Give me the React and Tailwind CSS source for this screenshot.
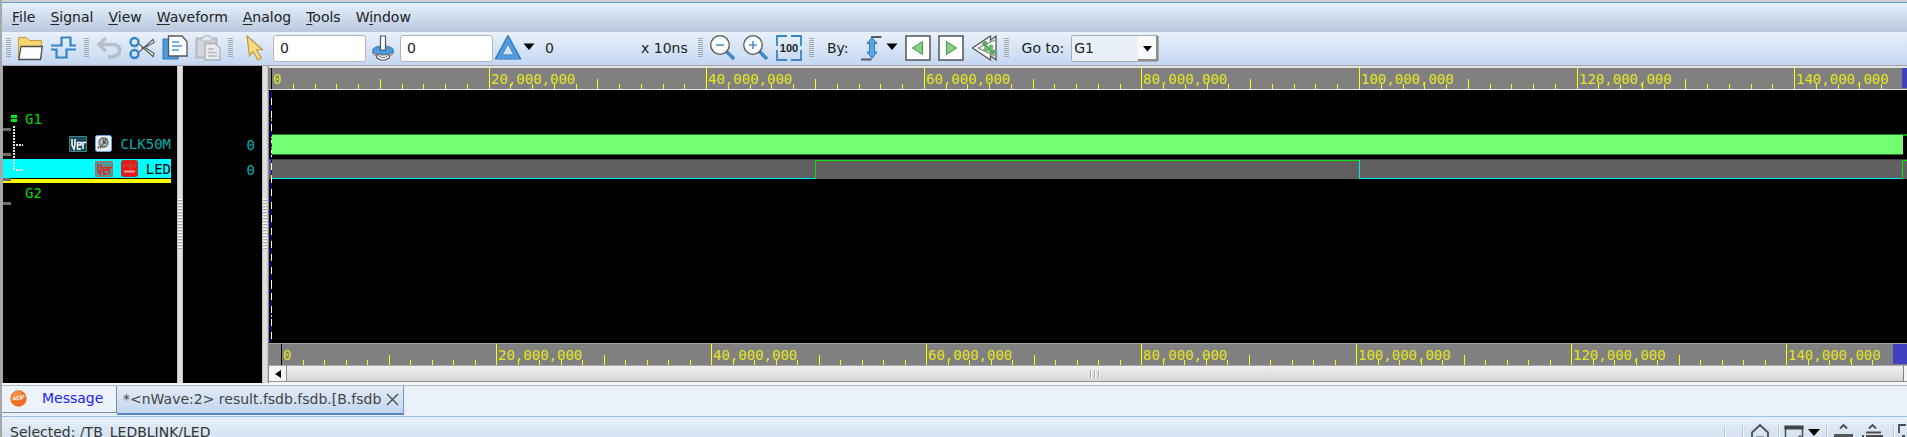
import React from "react";

const MENUS = [
  ["", "F", "ile"],
  ["", "S", "ignal"],
  ["", "V", "iew"],
  ["", "W", "aveform"],
  ["", "A", "nalog"],
  ["", "T", "ools"],
  ["W", "i", "ndow"],
];

function Grip() {
  return (
    <svg className="h-5 w-[5px] shrink-0" viewBox="0 0 5 20" aria-hidden="true">
      {Array.from({ length: 10 }, (_, i) => (
        <rect key={i} x="0" y={i * 2} width="5" height="1" fill="#a3a8ae" />
      ))}
    </svg>
  );
}

function Tool({ label, children }) {
  return (
    <button type="button" aria-label={label} className="h-[26px] w-[26px] shrink-0">
      <svg viewBox="0 0 26 26" className="h-[26px] w-[26px]" fill="none">
        {children}
      </svg>
    </button>
  );
}

function Caret({ label }) {
  return (
    <button type="button" aria-label={label} className="h-[26px] w-3 shrink-0">
      <svg viewBox="0 0 12 26" className="h-[26px] w-3">
        <path d="M0.500 8.500H11.500L6 15z" fill="#000" />
      </svg>
    </button>
  );
}

const Magnifier = ({ plus }) => (
  <>
    <path d="M16.500 16.500L24 24" stroke="#3c8ad0" strokeWidth="3.600" />
    <circle cx="10" cy="10" r="9.300" fill="#fff" stroke="#555" strokeWidth="1.300" />
    <path d={plus ? "M6 10h8M10 6v8" : "M6 10h8"} stroke="#4a90d0" strokeWidth="1.600" />
  </>
);

const fieldClass =
  "h-[27px] w-[93px] shrink-0 rounded-[3px] border border-[#b5b5b5] bg-white px-[6px] text-[14px] text-[#222] outline-none";

function Toolbar() {
  return (
    <div className="flex h-[33px] shrink-0 items-center gap-[7px] bg-linear-to-b from-[#e9f1fb] to-[#c4d7f1] pb-px pl-1">
      <Grip />
      <Tool label="Open">
        <path d="M0.500 23V2.500h8l3 3H23.500V23z" fill="#f9d572" stroke="#c79c45" />
        <path d="M3 11.500H24.300L22.500 24.500H0.800z" fill="#fff" stroke="#4c4c4c" strokeWidth="1.300" />
      </Tool>
      <Tool label="Get signals">
        <path d="M0 14.500H5.500V22.500H15.500V14.500H25" stroke="#3686c7" strokeWidth="2.200" />
        <path d="M0 10.500H10.500V2.500H19.500V10.500H25" stroke="#3686c7" strokeWidth="2.200" />
      </Tool>
      <Grip />
      <Tool label="Undo">
        <path d="M10 3L2.500 9.500L10 16" stroke="#b9bec4" strokeWidth="3" />
        <path d="M3 9.500H16C27 9.500 26 22 15 22H12" stroke="#b9bec4" strokeWidth="3.600" />
      </Tool>
      <Tool label="Cut">
        <circle cx="5.500" cy="7" r="4" stroke="#3686c7" strokeWidth="2.400" />
        <circle cx="5.500" cy="19" r="4" stroke="#3686c7" strokeWidth="2.400" />
        <path d="M10 9L24 21.500L25 18.500L16 12.500L25 7.500L24 4.500L10 17" fill="#fff" stroke="#666" strokeWidth="1.300" />
        <circle cx="13.500" cy="13" r="1" fill="#444" />
      </Tool>
      <Tool label="Copy">
        <path d="M1 4h15v20H1z" fill="#4c9be0" stroke="#2c78bd" />
        <path d="M6.500 1H20l5 5.500V21H6.500z" fill="#fff" stroke="#555" strokeWidth="1.300" />
        <path d="M10 7h7M10 11h10M10 15h7" stroke="#4c9be0" strokeWidth="1.500" />
      </Tool>
      <Tool label="Paste">
        <path d="M1.500 3.500h20v19h-20z" fill="#d3d7dc" stroke="#b4b8bd" strokeWidth="2" />
        <path d="M7 4V2h3V0.500h4V2h3v4H7z" fill="#e5e8ec" stroke="#b4b8bd" />
        <path d="M10 8.500h10l5 4.500v12H10z" fill="#e8ebf0" stroke="#adb1b6" strokeWidth="1.300" />
        <path d="M13 14h6M13 17.500h9M13 21h9" stroke="#b4b8bd" strokeWidth="1.400" />
      </Tool>
      <Grip />
      <Tool label="Cursor">
        <path d="M7 1L22.500 14.500L16.500 15L21.500 23L18 25L13 16.500L9.500 20.500z" fill="#fbdc80" stroke="#bf984a" strokeWidth="1.200" />
      </Tool>
      <input aria-label="Cursor time" defaultValue="0" className={fieldClass} />
      <button type="button" aria-label="Marker" className="h-[26px] w-5 shrink-0">
        <svg viewBox="2 0 22 26" className="-ml-px h-[26px] w-[22px]" fill="none">
          <path d="M5 17l2 6 4 2h4l4-2 2-6z" fill="#fff" stroke="#555" strokeWidth="1.200" />
          <ellipse cx="13" cy="15.500" rx="10.500" ry="4.500" fill="#4c9be0" stroke="#2c78bd" />
          <path d="M2.500 17c1 5 5 2 6 4 2 2 7 2 9 0 1-2 5 1 6-4-5 4-16 4-21 0z" fill="#fff" stroke="#666" />
          <path d="M10.500 1h5v14h-5z" fill="#fff" stroke="#555" strokeWidth="1.200" />
        </svg>
      </button>
      <div className="flex shrink-0 items-center gap-[2px]">
        <input aria-label="Marker time" defaultValue="0" className={fieldClass} />
        <Tool label="Delta">
          <path d="M13 4.500L22.500 22H3.500z" stroke="#2c6faf" strokeWidth="5" />
          <path d="M13 5L22 22H4z" stroke="#4f9fe2" strokeWidth="3.400" />
        </Tool>
        <Caret label="Delta options" />
        <span className="w-[102px] pl-2">0</span>
        <span className="w-[50px] whitespace-nowrap">x 10ns</span>
      </div>
      <Grip />
      <Tool label="Zoom out"><Magnifier /></Tool>
      <Tool label="Zoom in"><Magnifier plus /></Tool>
      <Tool label="Zoom all">
        <path d="M1 11V1h10M15 1h10v10M1 15v10h10M15 25h10V15" stroke="#3686c7" strokeWidth="1.800" />
        <text x="13" y="17" textAnchor="middle" fontSize="11" fontWeight="bold" fontFamily="Liberation Sans, sans-serif" fill="#222">100</text>
      </Tool>
      <Grip />
      <span className="shrink-0 pl-[6px]">By:</span>
      <div className="flex shrink-0 items-center pl-1">
        <Tool label="Any edge">
          <path d="M11 2h10.500M1 24.500h10.500" stroke="#5a5a5a" strokeWidth="2" />
          <path d="M12 2.500L17 8.500H14.500V17H17L12 23.500L7 17H9.500V8.500H7z" fill="#58a6e8" stroke="#3578b4" />
        </Tool>
        <Caret label="Edge options" />
      </div>
      <Tool label="Search backward">
        <path d="M1 1h24v24H1z" fill="#fff" stroke="#555" strokeWidth="1.500" />
        <path d="M17.500 6.500v13L7.500 13z" fill="#86cf86" stroke="#3f9c45" />
      </Tool>
      <Tool label="Search forward">
        <path d="M1 1h24v24H1z" fill="#fff" stroke="#555" strokeWidth="1.500" />
        <path d="M8.500 6.500v13l10-6.500z" fill="#86cf86" stroke="#3f9c45" />
      </Tool>
      <Tool label="Trace drivers">
        <path d="M19.500 1v4.500L25 1v24l-5.500-4.500V25L1.500 13z" fill="#fff" stroke="#555" strokeWidth="1.300" />
        <path d="M24 5L7 13l17 8" stroke="#666" />
        <path d="M12 8.500l10 9.500" stroke="#5aa65d" strokeWidth="3" />
        <circle cx="14" cy="8.500" r="2.600" fill="#58ad5c" />
        <circle cx="20" cy="12" r="2.400" fill="#6cb970" />
        <circle cx="15" cy="14.500" r="2.400" fill="#6cb970" />
        <circle cx="21.500" cy="17" r="2.800" fill="#58ad5c" />
      </Tool>
      <Grip />
      <label htmlFor="goto" className="shrink-0 pl-[6px]">Go to:</label>
      <div className="relative flex shrink-0 items-center">
        <select
          id="goto"
          defaultValue="G1"
          className="h-[27px] w-[88px] appearance-none rounded-[2px] border border-[#a9adb3] bg-[#e9f0f9] px-[2px] text-[14px] text-[#222]"
        >
          <option>G1</option>
          <option>G2</option>
        </select>
        <svg className="pointer-events-none absolute top-px right-px h-[25px] w-5" viewBox="0 0 20 25" aria-hidden="true">
          <path d="M0 0h20v25H0z" fill="#8d8d8d" />
          <path d="M0 0h18v23H0z" fill="#fafafa" />
          <path d="M5 10h9l-4.500 5.500z" fill="#000" />
        </svg>
      </div>
    </div>
  );
}

function Splitter() {
  return (
    <div className="flex w-[6px] shrink-0 items-center border-x border-x-[#c4c4c4] bg-[#dedede]">
      <svg className="h-[52px] w-1" viewBox="0 0 4 52" aria-hidden="true">
        {Array.from({ length: 17 }, (_, i) => (
          <g key={i}>
            <rect x="0" y={i * 3} width="4" height="1" fill="#fff" />
            <rect x="0" y={i * 3 + 1} width="4" height="1" fill="#a9a9a9" />
          </g>
        ))}
      </svg>
    </div>
  );
}

function VerIcon({ selected }) {
  const fg = selected ? "#f01818" : "#fff";
  return (
    <svg viewBox="0 0 18 16" className="h-4 w-[18px] shrink-0" fill="none" aria-hidden="true">
      <path d="M0.500 0.500h17v15H0.500z" fill={selected ? "#4c9a96" : "#184c58"} stroke={selected ? "#b06a60" : "#4a7f8b"} />
      <path d="M3 3v6l2 4 1-4V3M12 9H8.500V6.500H12zM8.500 9v4H12M14 13V6.500h3" stroke={fg} strokeWidth="1.500" />
    </svg>
  );
}

function SignalList() {
  return (
    <div className="relative w-[174px] shrink-0 bg-black pt-10 font-['DejaVu_Sans_Mono',monospace] text-[14px] leading-5">
      <div className="flex h-[25px] items-center gap-2 pl-2 text-[#00d800]">
        <svg viewBox="0 0 6 7" className="h-[7px] w-[6px]" aria-hidden="true">
          <path d="M0 0h6v3H0zM0 4h6v3H0z" fill="#00f000" />
        </svg>
        G1
      </div>
      <div className="flex h-7 items-center justify-end gap-2 pr-[6px] pb-[3px] text-[#00b0b0]">
        <VerIcon />
        <svg viewBox="0 0 17 17" className="h-[17px] w-[17px]" fill="none" aria-hidden="true">
          <rect x="0.500" y="0.500" width="16" height="16" rx="2" fill="#e9f0fa" stroke="#6fa3dc" />
          <circle cx="8.500" cy="7.500" r="4.500" fill="#bbb" stroke="#666" strokeWidth="1.300" />
          <path d="M5 13.500L12 3M8.500 4.500v3.500h3M4 11l-1 2.500" stroke="#555" strokeWidth="1.300" />
        </svg>
        CLK50M
      </div>
      <div className="mr-[6px] flex h-[19px] items-center justify-end gap-2 bg-[#00ffff] text-black">
        <VerIcon selected />
        <svg viewBox="0 0 17 17" className="h-[17px] w-[17px]" fill="none" aria-hidden="true">
          <rect x="0.500" y="0.500" width="16" height="16" rx="2" fill="#f21414" stroke="#a83830" />
          <path d="M3 8V4l2 2 2-2v4M12 4H9v2h3v2H9M13 4h3M14.500 4v4" stroke="#a65048" />
          <path d="M3 11.500h11" stroke="#d8a8a0" strokeWidth="2" />
        </svg>
        LED
      </div>
      <div className="mt-px mr-[6px] h-1 bg-[#ffff00]" />
      <div className="pl-[22px] text-[#00d800]">G2</div>
      <svg className="absolute top-0 left-0 h-[150px] w-6" viewBox="0 0 24 150" fill="none" aria-hidden="true">
        <path d="M0 63.500h8M0 88.500h8M0 113.500h8M0 137.500h8" stroke="#6e6e6e" strokeWidth="3" />
        <path d="M11 60v44M13 79h7M13 104h7" stroke="#e4e4e4" strokeWidth="2" strokeDasharray="2 1" />
      </svg>
    </div>
  );
}

function ValueList() {
  return (
    <div className="w-[79px] shrink-0 bg-black pt-[67px] pr-[7px] text-right font-['DejaVu_Sans_Mono',monospace] text-[14px] leading-[25px] text-[#00b0b0]">
      <div>0</div>
      <div>0</div>
    </div>
  );
}

function Ruler({ origin, step, end }) {
  const majors = Array.from({ length: 8 }, (_, i) => i);
  const minors = Array.from({ length: 80 }, (_, i) => i).filter((i) => i % 10 && origin + (i * step) / 10 < end);
  return (
    <svg className="block h-[21px] w-full" aria-hidden="true" shapeRendering="crispEdges">
      {minors.map((i) => {
        const h = i % 5 === 0 ? 10 : 5;
        return <rect key={i} x={Math.round(origin + (i * step) / 10)} y={21 - h} width="1" height={h} fill="#ffff00" />;
      })}
      {majors.map((i) => {
        const x = Math.round(origin + i * step);
        return (
          <g key={i}>
            <rect x={x} y="0" width="1" height="21" fill={i ? "#ffff00" : "#000"} />
            <text x={x + 2} y="16" fill="#e4e420" fontSize="14" fontFamily="'DejaVu Sans Mono', monospace">
              {(i * 20000000).toLocaleString("en-US")}
            </text>
          </g>
        );
      })}
      <rect x={end} y="0" width="100%" height="20" fill="#4040c0" />
    </svg>
  );
}

function Waves() {
  return (
    <svg className="block min-h-0 w-full flex-1 bg-black" fill="none" aria-hidden="true" shapeRendering="crispEdges">
      <rect x="2" y="44" width="1632" height="21" fill="#247a24" />
      <rect x="2" y="45" width="1632" height="19" fill="#73ff73" />
      <rect x="1634" y="44" width="100%" height="2" fill="#00a000" />
      <rect x="0" y="69" width="100%" height="20" fill="#606060" />
      <rect x="0" y="69" width="100%" height="1" fill="#404040" />
      <path d="M2 88.500H546" stroke="#00e8f0" />
      <path d="M546.500 89V70.500H1090" stroke="#10dc10" />
      <path d="M1090.500 70V88.500H1633" stroke="#00e8f0" />
      <path d="M1633.500 89V70.500H3000" stroke="#00f000" />
      <path d="M2.500 1V252" stroke="#0000f0" />
      <path d="M2.500 8V252" stroke="#fff" strokeDasharray="7 6" />
      <path d="M2.500 29V252" stroke="#f0f000" strokeDasharray="2 26" />
      <path d="M2.500 48V65" stroke="#a02080" strokeDasharray="2 3" />
    </svg>
  );
}

function WavePane() {
  return (
    <div className="flex min-w-0 flex-1 flex-col border-l border-[#8a8a8a]">
      <div className="shrink-0 border-t-2 border-b border-[#e2e2e2] bg-[#808080]">
        <Ruler origin={2} step={217.6} end={1633} />
      </div>
      <Waves />
      <div className="shrink-0 border-y border-[#a6a6a6] bg-[#808080]">
        <Ruler origin={12} step={215} end={1624} />
      </div>
      <div className="flex h-4 shrink-0 items-stretch border-b border-[#909090] bg-linear-to-b from-[#f0f0f0] to-[#d6d6d6]">
        <button type="button" aria-label="Scroll left" className="flex w-[18px] items-center justify-center border-r border-[#909090] bg-[#f4f4f4]">
          <svg viewBox="0 0 6 8" className="h-2 w-[6px]"><path d="M6 0v8L0 4z" fill="#000" /></svg>
        </button>
        <div className="flex flex-1 items-center justify-center">
          <svg viewBox="0 0 10 8" className="h-2 w-[10px]" aria-hidden="true">
            <path d="M0.500 0v8M4.500 0v8M8.500 0v8" stroke="#aaa" />
            <path d="M1.500 0v8M5.500 0v8M9.500 0v8" stroke="#fff" />
          </svg>
        </div>
        <div className="w-1 border-l border-[#808080] bg-[#f4f4f4]" />
      </div>
      <div className="h-px shrink-0 bg-[#f4f6f8]" />
    </div>
  );
}

function Tabs() {
  return (
    <div className="flex h-8 shrink-0 items-start border-t border-t-[#b0bac6] border-b border-b-[#9dbde9] bg-[#eaf1f9]">
      <button type="button" className="flex h-[27px] w-[115px] items-center gap-[15px] border-r border-b border-[#7a8ba8] bg-[#edf3fa] pb-[2px] pl-2 text-[#1a1aff]">
        <svg viewBox="0 0 17 17" className="h-[17px] w-[17px]" fill="none" aria-hidden="true">
          <circle cx="8.500" cy="8.500" r="8.200" fill="#ee7024" />
          <circle cx="7.500" cy="6" r="5" fill="#f58d4c" />
          <path d="M3 10.500V7.500l2 2.500V7M8.500 6.500H7v3h1.500M10 6v3h1.500V6zM13 8.500V5l1.500 2" stroke="#fff" strokeWidth="0.900" />
        </svg>
        Message
      </button>
      <div className="flex h-[29px] items-center gap-[5px] border-r border-b-2 border-r-[#6f96cc] border-b-[#5686c8] bg-linear-to-b from-[#e3ecf8] to-[#c3d6f0] pr-1 pb-px pl-[6px] text-[#444]">
        <button type="button">*&lt;nWave:2&gt; result.fsdb.fsdb.[B.fsdb</button>
        <button type="button" aria-label="Close tab">
          <svg viewBox="0 0 13 13" className="h-[13px] w-[13px]" fill="none">
            <path d="M1 1l11 11M12 1L1 12" stroke="#4c4c4c" strokeWidth="1.400" />
          </svg>
        </button>
      </div>
    </div>
  );
}

function Separator() {
  return <div className="mt-[9px] h-6 w-[2px] shrink-0 border-l border-[#bcc3cc] bg-[#f2f4f7]" />;
}

function StatusBar() {
  return (
    <div className="flex h-5 shrink-0 items-start overflow-hidden bg-linear-to-b from-[#e8f0fa] to-[#d5e2f2] pl-2 text-[#333]">
      <span className="flex-1 pt-[5px]">Selected: /TB_LEDBLINK/LED</span>
      <Separator />
      <div className="w-4" />
      <Separator />
      <button type="button" aria-label="Home" className="mr-2 ml-[6px] pt-[6px]">
        <svg viewBox="0 0 20 22" className="h-[22px] w-5" fill="none">
          <path d="M2 21V9.500L10 2l8 7.500V21M6 14.500h8" stroke="#4c4c4c" strokeWidth="1.800" />
        </svg>
      </button>
      <Separator />
      <button type="button" aria-label="Windows" className="ml-1 pt-[6px]">
        <svg viewBox="0 0 20 22" className="h-[22px] w-5" fill="none">
          <path d="M1.500 3v18M18.500 3v11M1 19h11M16 13v7" stroke="#4c4c4c" strokeWidth="1.500" />
          <path d="M0.500 2.500h19v4h-19z" fill="#444" />
          <path d="M12 16l4-4 4 4z" fill="#444" />
        </svg>
      </button>
      <button type="button" aria-label="Window options" className="mr-[6px] ml-1 pt-3">
        <svg viewBox="0 0 12 7" className="h-[7px] w-3"><path d="M0 0h12L6 7z" fill="#000" /></svg>
      </button>
      <Separator />
      <button type="button" aria-label="Collapse panel" className="ml-[5px] pt-[6px]">
        <svg viewBox="0 0 21 22" className="h-[22px] w-[21px]" fill="none">
          <path d="M7 5.500L10.500 2L14 5.500" stroke="#4c4c4c" strokeWidth="1.800" />
          <path d="M1 11h19v9H1z" fill="#555" />
        </svg>
      </button>
      <button type="button" aria-label="Expand list" className="mr-[10px] ml-2 pt-[6px]">
        <svg viewBox="0 0 21 22" className="h-[22px] w-[21px]" fill="none">
          <path d="M7 5.500L10.500 2L14 5.500M4 9.500h15M0 13h2M4 13h17" stroke="#4c4c4c" strokeWidth="1.800" />
        </svg>
      </button>
      <Separator />
      <button type="button" aria-label="Full screen" className="ml-[3px] w-[9px] overflow-hidden pt-[6px]">
        <svg viewBox="0 0 9 22" className="h-[22px] w-[9px]" fill="none">
          <path d="M1 10V2h7M4 13h3" stroke="#4c4c4c" strokeWidth="1.800" />
        </svg>
      </button>
    </div>
  );
}

export default function App() {
  return (
    <div className="flex h-screen overflow-hidden bg-[#a8a8a8] pl-[2px] font-['DejaVu_Sans',sans-serif] text-[14px] leading-5 text-[#222]">
      <div className="flex min-w-0 flex-1 flex-col">
        <div className="h-[2px] shrink-0 bg-[#d0d0d0]" />
        <nav className="flex h-[30px] shrink-0 items-center gap-[15px] border-t border-[#6a9ad8] bg-linear-to-b from-[#e6f0fd] to-[#b9c8de] pb-px pl-[10px]">
          {MENUS.map(([before, key, after]) => (
            <button type="button" key={before + key + after}>
              {before}
              <span className="underline underline-offset-2">{key}</span>
              {after}
            </button>
          ))}
        </nav>
        <Toolbar />
        <main className="flex min-h-0 flex-1 border-t border-l border-[#a4a4a4]">
          <SignalList />
          <Splitter />
          <ValueList />
          <Splitter />
          <WavePane />
        </main>
        <div className="h-[2px] shrink-0 bg-[#f4f6f8]" />
        <Tabs />
        <StatusBar />
      </div>
    </div>
  );
}
